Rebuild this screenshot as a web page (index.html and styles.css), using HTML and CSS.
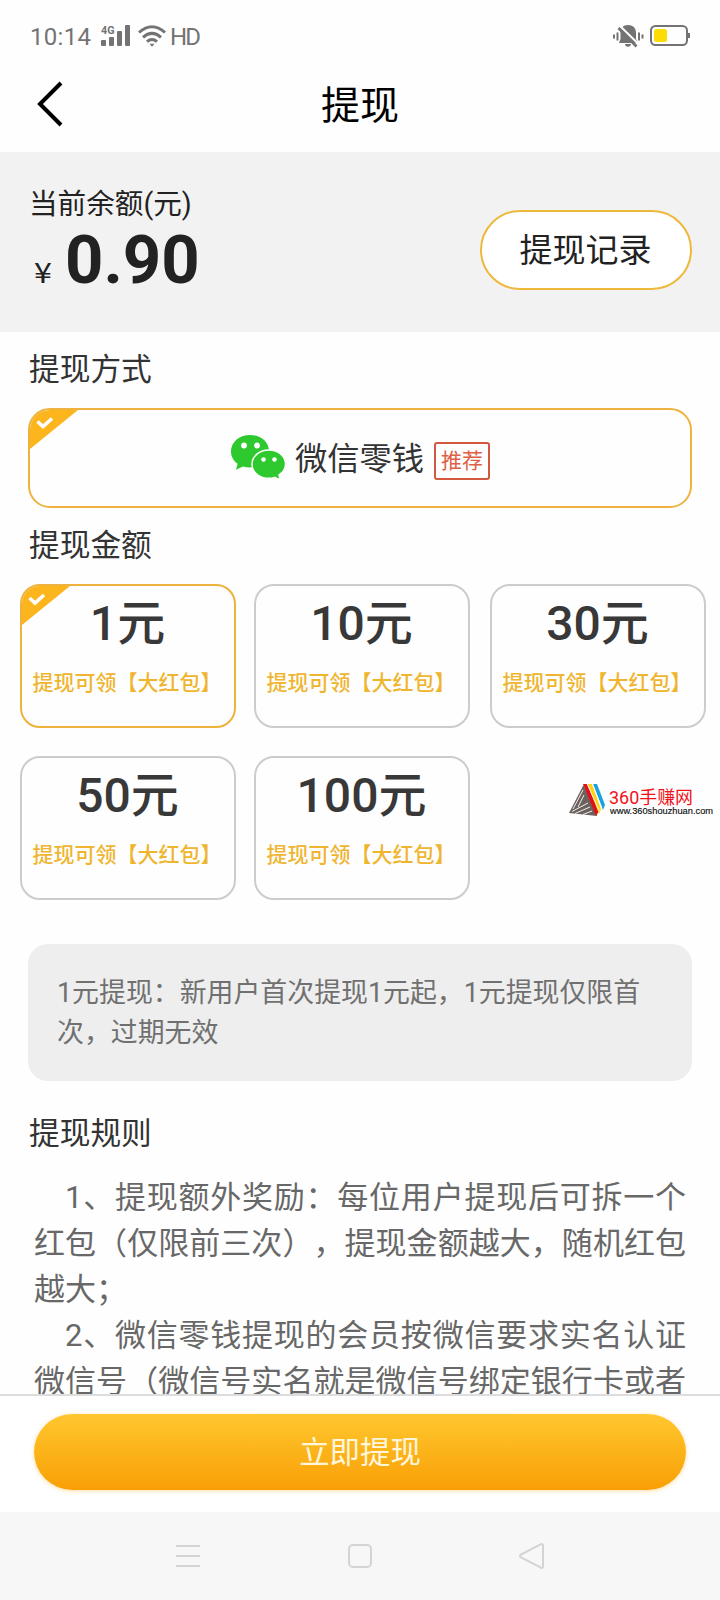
FILE: index.html
```html
<!DOCTYPE html>
<html lang="zh-CN">
<head>
<meta charset="utf-8">
<title>提现</title>
<link rel="stylesheet" href="styles.css">
</head>
<body>
<div class="screen">
  <div class="status">
    <span class="clock">10:14</span>
    <svg class="signal" width="30" height="22" viewBox="0 0 30 22">
      <text x="0" y="8.500" font-size="11" font-weight="700" textLength="13.500" lengthAdjust="spacingAndGlyphs">4G</text>
      <rect x="0" y="15" width="5" height="6" rx="1"/><rect x="8" y="12" width="5" height="9" rx="1"/><rect x="16" y="6" width="5" height="15" rx="1"/><rect x="24" y="0" width="5" height="21" rx="1"/>
    </svg>
    <svg class="wifi" width="28" height="22" viewBox="0 0 28 22">
      <g fill="none" stroke-width="3"><path d="M1 7.500Q14-4 27 7.500"/><path d="M5 12.300Q14 4.500 23 12.300"/><path d="M9 16.600Q14 12.500 19 16.600"/></g>
      <path class="solid" d="M11.500 18.800h5L14 21.800z"/>
    </svg>
    <span class="hd">HD</span>
    <svg class="mute" width="32" height="24" viewBox="0 0 32 24">
      <path d="M16 1c6 0 8 4 8 8v6l2 4H7l1.500-4V9C8.500 4 11 1 16 1zM13 20h6c0 3.500-6 3.500-6 0z"/>
      <path d="M7.500 1.500 27 20.500" stroke="#fefefe" stroke-width="2"/><path d="M6.500 4 24.500 22.500" stroke="#737373" stroke-width="2.800"/>
      <path d="M2 10.500v4M5.500 8.500v8M27 8.500v8M30.500 10.500v4" stroke="#737373" stroke-width="2"/>
    </svg>
    <svg class="battery" width="40" height="22" viewBox="0 0 40 22">
      <rect x="1" y="1" width="36" height="19" rx="4.500" fill="none" stroke="#737373" stroke-width="2"/>
      <rect x="4" y="4" width="13" height="13" rx="2.500" fill="#fbdc05"/><rect x="38" y="8" width="2" height="5" fill="#737373"/>
    </svg>
  </div>
  <header class="titlebar">
    <svg class="back" width="26" height="46" viewBox="0 0 26 46"><path d="M24 2 3 23l21 21" fill="none" stroke="#000" stroke-width="4"/></svg>
    <h1 class="title">提现</h1>
  </header>
  <section class="balance">
    <div class="balance-info">
      <div class="balance-label">当前余额(元)</div>
      <div class="balance-value"><span class="yen">¥</span><span class="num">0.90</span></div>
    </div>
    <button class="record">提现记录</button>
  </section>
  <main class="content">
    <h2 class="heading">提现方式</h2>
    <div class="method">
      <svg class="corner" width="48" height="39" viewBox="0 0 48 39"><path d="M0 0H48L0 39z" fill="#fcb51c"/><path d="M7.500 11.500 13 16.500 22 8.500" fill="none" stroke="#fff" stroke-width="3.600"/></svg>
      <svg class="wechat" width="56" height="46" viewBox="0 0 56 46">
        <path d="M20 1C9 1 1 8.200 1 17.300c0 5.500 2.700 9.700 6.600 12.500L6 35.800l7-3.400c2.200.7 4.700 1 7 1 11 0 19-7 19-16.100S31 1 20 1z" fill="#2dc92f"/>
        <path d="M39 16c-9.700 0-17 6.300-17 14.200S29.300 44.300 39 44.300c2 0 4-.3 5.600-.9L50.500 46 49 41c4-2.600 6.500-6.300 6.500-10.800C55.500 22.300 48.700 16 39 16z" fill="#2dc92f" stroke="#fff" stroke-width="1.500"/>
        <g fill="#fff"><circle cx="14" cy="11.500" r="2.900"/><circle cx="27" cy="11.500" r="2.900"/><circle cx="33.500" cy="25.500" r="2.300"/><circle cx="44.500" cy="25.500" r="2.300"/></g>
      </svg>
      <span class="method-name">微信零钱</span>
      <span class="tag">推荐</span>
    </div>
    <h2 class="heading amount-heading">提现金额</h2>
    <div class="amounts">
      <div class="card selected">
        <svg class="corner" width="48" height="39" viewBox="0 0 48 39"><path d="M0 0H48L0 39z" fill="#fcb51c"/><path d="M7.500 12 13 17 22 9" fill="none" stroke="#fff" stroke-width="3.600"/></svg>
        <b class="amount">1元</b><span class="bonus">提现可领【大红包】</span>
      </div>
      <div class="card"><b class="amount">10元</b><span class="bonus">提现可领【大红包】</span></div>
      <div class="card"><b class="amount">30元</b><span class="bonus">提现可领【大红包】</span></div>
      <div class="card"><b class="amount">50元</b><span class="bonus">提现可领【大红包】</span></div>
      <div class="card"><b class="amount">100元</b><span class="bonus">提现可领【大红包】</span></div>
      <svg class="site" width="147" height="36" viewBox="0 0 147 36">
        <path d="M14.500 2 28 33 0 30z" fill="#6b625e"/>
        <path d="M14 7 4 26M15 12 9 24M3 28.500 19 20M6 30.500 21 24M14 31.500l9-3.500" stroke="#fff" stroke-width=".9" fill="none"/>
        <path d="M14 1h4l12 27-3 5z" fill="#e0101a"/><path d="M18.500 1H23l9 25-2 5z" fill="#ffd21a"/><path d="M24 1h4l8 21-2 5z" fill="#18a3dc"/>
        <path d="M18.200 1 30.300 28M23.500 1 32.700 25" stroke="#fff" stroke-width=".8"/>
        <text class="site-name" x="40" y="21" textLength="84" lengthAdjust="spacingAndGlyphs">360手赚网</text>
        <text class="site-url" x="41" y="31" textLength="103" lengthAdjust="spacingAndGlyphs">www.360shouzhuan.com</text>
      </svg>
    </div>
    <p class="notice">1元提现：新用户首次提现1元起，1元提现仅限首<br>次，过期无效</p>
    <h2 class="heading">提现规则</h2>
    <div class="rules">
      <div class="line first">1、提现额外奖励：每位用户提现后可拆一个</div>
      <div class="line">红包（仅限前三次），提现金额越大，随机红包</div>
      <div class="line short">越大；</div>
      <div class="line first">2、微信零钱提现的会员按微信要求实名认证</div>
      <div class="line last">微信号（微信号实名就是微信号绑定银行卡或者</div>
    </div>
  </main>
  <footer class="footer"><button class="submit">立即提现</button></footer>
  <nav class="nav">
    <svg width="24" height="26" viewBox="0 0 24 26"><path d="M0 3h24M0 13h24M0 23h24"/></svg>
    <svg width="24" height="26" viewBox="0 0 24 26"><rect x="1" y="2" width="22" height="22" rx="4"/></svg>
    <svg width="26" height="26" viewBox="0 0 26 26"><path d="M2 11.500 22 1.200Q24 .5 24 3v20q0 2.500-2 1.700L2 14.500q-2-1.500 0-3z"/></svg>
  </nav>
</div>
</body>
</html>
```
FILE: styles.css
```css
* { box-sizing: border-box; margin: 0; padding: 0; }
body { background: #fff; font-family: Roboto, "Noto Sans CJK SC", sans-serif; text-spacing-trim: space-all; color: #333; }
svg { display: block; flex: none; }
button { font-family: inherit; }
.screen { width: 720px; height: 1600px; overflow: hidden; display: flex; flex-direction: column; background: #fefefe; }
.status { height: 72px; flex: none; display: flex; align-items: center; padding: 0 30px; color: #737373; fill: #737373; stroke: none; font-size: 24px; }
.clock { width: 71px; padding-top: 2px; letter-spacing: .3px; }
.wifi { margin-left: 7px; stroke: #737373; }
.wifi .solid { stroke: none; }
.hd { margin: 2px 0 0 4px; letter-spacing: -1.800px; }
.mute { margin-left: auto; }
.battery { margin-left: 6px; }
.titlebar { height: 80px; flex: none; display: grid; grid-template-columns: 100px 1fr 100px; padding-bottom: 13px; }
.back { margin: 9px 0 0 37px; }
.title { font-size: 39px; font-weight: 400; line-height: 69px; text-align: center; color: #000; }
.balance { height: 180px; flex: none; background: #f2f2f2; display: flex; justify-content: space-between; padding: 32px 28px 0 29px; color: #222; }
.balance-label { font-size: 28.600px; line-height: 40px; }
.balance-value { display: flex; align-items: baseline; padding-left: 5px; line-height: 73px; }
.yen { font-family: "Noto Sans CJK SC", sans-serif; font-size: 28px; width: 31px; transform: scaleX(1.150); transform-origin: 0 0; }
.num { font-size: 67px; font-weight: 700; }
.record { width: 212px; height: 80px; margin-top: 26px; border: 2px solid #eeb93a; border-radius: 40px; background: #fff; font-size: 33px; color: #222; padding: 0 1px 5px 0; }
.content { flex: 1; min-height: 0; overflow: hidden; padding: 16px 28px 0; }
.heading { font-size: 30.700px; font-weight: 400; line-height: 44px; padding-left: 1px; }
.method { position: relative; height: 100px; margin-top: 16px; border: 2px solid #eeb23e; border-radius: 22px; overflow: hidden; display: flex; align-items: center; justify-content: center; }
.corner { position: absolute; left: 0; top: 0; }
.wechat { margin: -2px 9px 0 0; }
.method-name { font-size: 32.300px; padding-bottom: 4px; }
.tag { width: 56px; height: 38px; margin: 5px 0 0 10px; border: 2px solid #d2583e; border-radius: 3px; color: #de6045; font-size: 21px; line-height: 34px; text-align: center; }
.amount-heading { margin-top: 16px; }
.amounts { display: grid; grid-template-columns: 234px 236px 216px; grid-auto-rows: 144px; row-gap: 28px; margin: 16px -14px 0 -8px; }
.card { position: relative; width: 216px; border: 2px solid #ccc; border-radius: 20px; overflow: hidden; display: flex; flex-direction: column; align-items: center; }
.card.selected { border-color: #eeb23e; }
.amount { font-size: 48px; font-weight: 500; line-height: 70px; padding: 3px 1px 0 0; color: #383838; }
.bonus { font-size: 21px; font-weight: 500; line-height: 30px; padding: 9px 2px 0 0; color: #efb52f; white-space: nowrap; }
.site { margin: 27px 0 0 79px; }
.site-name { font-size: 18px; fill: #f1121a; }
.site-url { font-family: "Liberation Sans", sans-serif; font-size: 9px; fill: #111; stroke: #111; stroke-width: .15px; }
.notice { height: 137px; margin-top: 44px; border-radius: 20px; background: #eee; padding: 29px; font-size: 26.900px; line-height: 40px; color: #707070; white-space: nowrap; }
.notice + .heading { margin-top: 31px; }
.rules { margin-top: 19px; padding: 0 6px; color: #686868; font-size: 31px; }
.line { line-height: 46px; height: 46px; white-space: nowrap; text-align: justify; text-align-last: justify; text-justify: inter-character; }
.first { padding-left: 31px; }
.short { text-align-last: left; }
.last { margin-top: 7px; line-height: 31px; height: 31px; }
.footer { height: 118px; flex: none; border-top: 2px solid #ddd; background: #fff; padding: 18px 34px 0; }
.submit { display: block; width: 100%; height: 76px; border: 0; border-radius: 39px; background: linear-gradient(#ffc72f, #f99f05); box-shadow: 0 1px 4px #ffbd4280; color: #fff6dc; font-size: 30.400px; padding-bottom: 5px; }
.nav { height: 88px; flex: none; background: #f7f7f7; display: flex; justify-content: space-between; padding: 31px 175px 0 176px; fill: none; stroke: #d4d4d4; stroke-width: 2; }
```
